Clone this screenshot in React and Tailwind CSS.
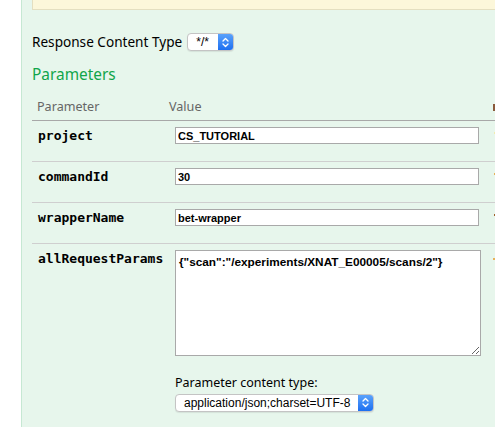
import React from "react";

const sans = { fontFamily: '"Noto Sans", "Open Sans", sans-serif' };

const Chevrons = () => (
  <svg width="7" height="11" viewBox="0 0 7 11" fill="none" stroke="white" strokeWidth="1.3" strokeLinecap="round" strokeLinejoin="round">
    <path d="M1 4 L3.5 1.5 L6 4" />
    <path d="M1 7 L3.5 9.5 L6 7" />
  </svg>
);

const MacSelect = ({ value, className }) => (
  <div className={`flex h-[18px] items-stretch overflow-hidden rounded-[4px] border border-[#c4c4c4] bg-white shadow-[0_1px_1px_rgba(0,0,0,0.08)] ${className}`}>
    <span className="flex flex-1 items-center pl-[8px] font-['Liberation_Sans',sans-serif] text-[12px] text-black">{value}</span>
    <span className="flex w-[15px] items-center justify-center bg-gradient-to-b from-[#5aa2fb] to-[#1c6ff0]">
      <Chevrons />
    </span>
  </div>
);

const params = [
  { name: "project", value: "CS_TUTORIAL", mark: "bg-[#f2ecb0]" },
  { name: "commandId", value: "30", mark: "bg-[#e6b15a]" },
  { name: "wrapperName", value: "bet-wrapper", mark: "bg-[#a0602a]" },
];

export default function App() {
  return (
    <div className="flex h-[427px] w-[495px] overflow-hidden bg-white" style={sans}>
      <div className="w-[21px] shrink-0 bg-white" />
      <div className="flex-1 border-l border-[#c6e8d3] bg-[#e7f6ec] pl-[10px]">
        <div className="h-[10px] border-b border-l border-[#e4dfc0] bg-[#fcf7da]" />

        <div className="mt-[23px] flex h-[18px] items-center">
          <span className="text-[13.6px] leading-none text-black">Response Content Type</span>
          <MacSelect value="*/*" className="ml-[5px] w-[47px]" />
        </div>

        <h4 className="mt-[16px] text-[15.4px] leading-none text-[#10a54a]">Parameters</h4>

        <div className="mt-[13px] flex h-[26px] items-center border-b border-[#a8a8a8] text-[12.6px] text-[#666]">
          <span className="w-[137px] pl-[5px]">Parameter</span>
          <span className="flex-1">Value</span>
          <span className="mr-[1px] h-[7px] w-[2px] bg-[#8a5a3c]" />
        </div>

        {params.map((p) => (
          <div key={p.name} className="flex h-[41px] items-start border-b border-[#cfcfcf] pt-[6px]">
            <span className="w-[143px] pl-[6px] font-['DejaVu_Sans_Mono',monospace] text-[13px] font-bold leading-[17px] text-black">
              {p.name}
            </span>
            <input
              readOnly
              value={p.value}
              className="h-[17px] w-[304px] border border-[#a9a9a9] bg-white px-[2px] font-['Liberation_Sans',sans-serif] text-[11px] font-bold text-black outline-none"
            />
            <span className={`ml-[15px] mt-[5px] h-[2px] w-[2px] ${p.mark}`} />
          </div>
        ))}

        <div className="flex items-start pt-[6px]">
          <span className="w-[143px] pl-[6px] font-['DejaVu_Sans_Mono',monospace] text-[13px] font-bold leading-[17px] text-black">
            allRequestParams
          </span>
          <div className="flex flex-col">
            <textarea
              readOnly
              value={'{"scan":"/experiments/XNAT_E00005/scans/2"}'}
              className="h-[106px] w-[306px] resize border border-[#a9a9a9] bg-white px-[3px] py-[4px] font-['Liberation_Sans',sans-serif] text-[11.8px] font-bold leading-[14px] text-black outline-none"
            />
            <span className="mt-[21px] text-[12.5px] leading-none text-black">Parameter content type:</span>
            <MacSelect value="application/json;charset=UTF-8" className="mt-[4px] w-[199px]" />
          </div>
          <span className="ml-[12px] mt-[8px] h-[2px] w-[2px] bg-[#e6b15a]" />
        </div>
      </div>
    </div>
  );
}
